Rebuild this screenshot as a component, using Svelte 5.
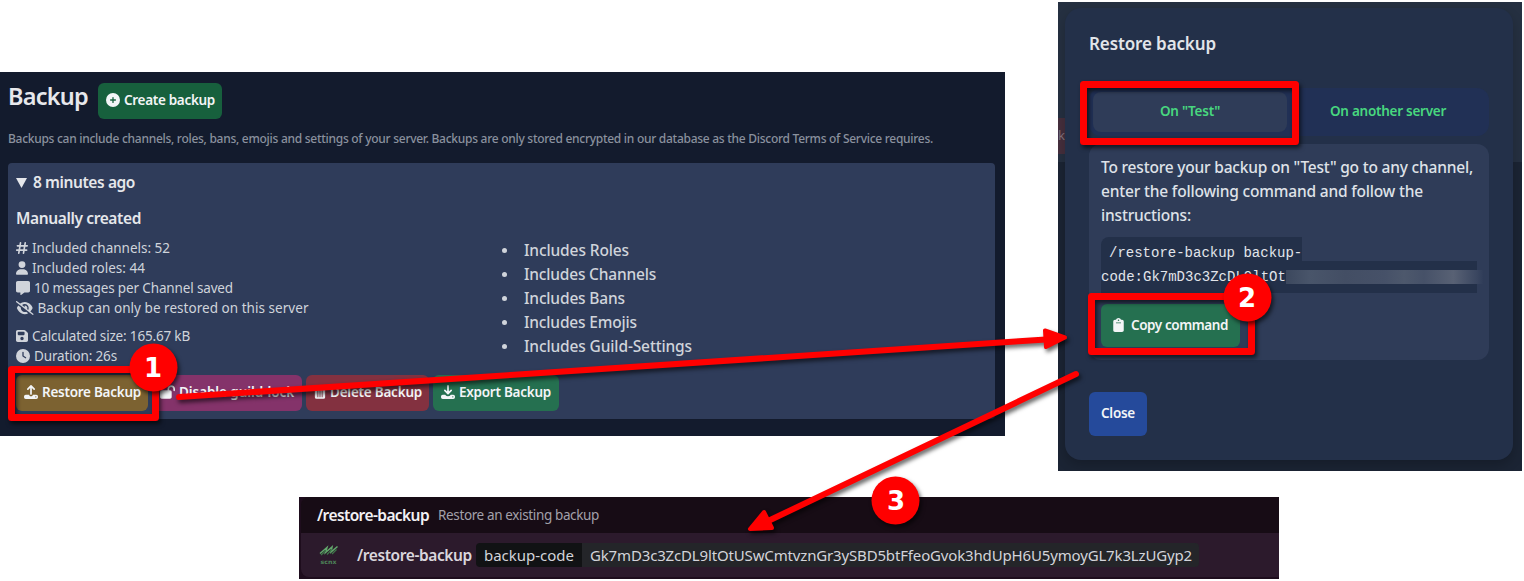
<script>
  const icons = {
    plus: { box: '0 0 512 512', w: 14, h: 14, d: 'M256 512A256 256 0 1 0 256 0a256 256 0 1 0 0 512zM232 344V280H168c-13.3 0-24-10.7-24-24s10.7-24 24-24h64V168c0-13.3 10.7-24 24-24s24 10.7 24 24v64h64c13.3 0 24 10.7 24 24s-10.7 24-24 24H280v64c0 13.3-10.7 24-24 24s-24-10.7-24-24z' },
    hash: { box: '0 0 448 512', w: 12, h: 14, line: 'M168 62L104 450M344 62L280 450M52 176H420M28 336H396' },
    user: { box: '0 0 448 512', w: 12, h: 14, d: 'M224 256A128 128 0 1 0 224 0a128 128 0 1 0 0 256zm-45.700 48C79.800 304 0 383.800 0 482.300C0 498.700 13.300 512 29.700 512H418.300c16.400 0 29.700-13.300 29.700-29.700C448 383.800 368.200 304 269.700 304H178.300z' },
    message: { box: '0 0 512 512', w: 14, h: 14, d: 'M64 0C28.700 0 0 28.700 0 64V352c0 35.300 28.700 64 64 64h96v80c0 6.100 3.400 11.600 8.800 14.300s11.900 2.100 16.800-1.500L309.300 416H448c35.300 0 64-28.700 64-64V64c0-35.300-28.700-64-64-64H64z' },
    hidden: { box: '0 0 640 512', w: 17.5, h: 14, d: 'M38.8 5.1C28.4-3.1 13.3-1.2 5.1 9.2S-1.2 34.7 9.2 42.900l592 464c10.400 8.200 25.500 6.300 33.700-4.100s6.300-25.500-4.100-33.700L525.600 386.700c39.600-40.600 66.400-86.100 79.900-118.400c3.300-7.900 3.300-16.700 0-24.600c-14.900-35.700-46.200-87.700-93-131.100C465.500 68.800 400.800 32 320 32c-68.200 0-125 26.300-169.300 60.800L38.800 5.100zM223.100 149.500C248.600 126.200 282.700 112 320 112c79.500 0 144 64.500 144 144c0 24.900-6.300 48.300-17.400 68.700L408 294.500c8.400-19.300 10.600-41.400 4.800-63.300c-11.100-41.500-47.800-69.400-88.600-71.100c-5.800-.2-9.200 6.100-7.400 11.700c2.100 6.400 3.300 13.200 3.300 20.300c0 10.200-2.400 19.800-6.600 28.300l-90.300-70.800zM373 389.900c-16.400 6.500-34.300 10.100-53 10.100c-79.500 0-144-64.500-144-144c0-6.900 .5-13.600 1.400-20.200L83.100 161.500C60.300 191.200 44 220.800 34.500 243.700c-3.300 7.900-3.300 16.700 0 24.600c14.900 35.700 46.200 87.700 93 131.100C174.500 443.200 239.200 480 320 480c47.800 0 89.900-12.900 126.200-32.500L373 389.900z' },
    save: { box: '0 0 448 512', w: 12, h: 14, d: 'M64 32C28.700 32 0 60.700 0 96V416c0 35.300 28.700 64 64 64H384c35.300 0 64-28.700 64-64V173.300c0-17-6.700-33.300-18.700-45.300L352 50.700C340 38.700 323.700 32 306.700 32H64zm0 96c0-17.700 14.300-32 32-32H288c17.700 0 32 14.300 32 32v64c0 17.700-14.300 32-32 32H96c-17.700 0-32-14.300-32-32V128zM224 288a64 64 0 1 1 0 128 64 64 0 1 1 0-128z' },
    clock: { box: '0 0 512 512', w: 14, h: 14, d: 'M256 0a256 256 0 1 1 0 512A256 256 0 1 1 256 0zM232 120V256c0 8 4 15.500 10.700 20l96 64c11 7.400 25.900 4.400 33.300-6.700s4.400-25.900-6.700-33.300L280 243.200V120c0-13.300-10.700-24-24-24s-24 10.700-24 24z' },
    upload: { box: '0 0 512 512', w: 14, h: 14, line: 'M256 330V50M140 150L256 34L372 150', d: 'M64 352H192C192 430 320 430 320 352H448Q512 352 512 416V448Q512 512 448 512H64Q0 512 0 448V416Q0 352 64 352zM432 408a24 24 0 1 0 0 48 24 24 0 1 0 0-48z' },
    download: { box: '0 0 512 512', w: 14, h: 14, line: 'M256 30V310M140 200L256 316L372 200', d: 'M64 352H150C220 430 292 430 362 352H448Q512 352 512 416V448Q512 512 448 512H64Q0 512 0 448V416Q0 352 64 352zM432 408a24 24 0 1 0 0 48 24 24 0 1 0 0-48z' },
    unlock: { box: '0 0 576 512', w: 15, h: 14, d: 'M352 144c0-44.200 35.800-80 80-80s80 35.800 80 80v48c0 17.700 14.300 32 32 32s32-14.300 32-32V144C576 64.500 511.500 0 432 0S288 64.500 288 144v48H64c-35.300 0-64 28.700-64 64V448c0 35.300 28.700 64 64 64H384c35.300 0 64-28.700 64-64V256c0-35.300-28.700-64-64-64H352V144z' },
    trash: { box: '0 0 448 512', w: 12, h: 14, d: 'M135 18L128 32H32a32 32 0 0 0 0 64H416a32 32 0 0 0 0-64H320L313 18Q304 0 284 0H164Q144 0 135 18zM416 128H32V448Q32 512 96 512H352Q416 512 416 448zM128 192h32V448h-32zM208 192h32V448h-32zM288 192h32V448h-32z' },
    clipboard: { box: '0 0 384 512', w: 11, h: 14, d: 'M192 0c-41.800 0-77.400 26.700-90.500 64H64C28.700 64 0 92.700 0 128V448c0 35.300 28.700 64 64 64H320c35.300 0 64-28.700 64-64V128c0-35.300-28.700-64-64-64H282.500C269.400 26.700 233.800 0 192 0zM192 56a28 28 0 1 1 0 56 28 28 0 1 1 0-56zM100 160H284V192H100z' }
  };

  const facts = [
    ['hash', 'Included channels: 52', 138],
    ['user', 'Included roles: 44', 113],
    ['message', '10 messages per Channel saved', 199],
    ['hidden', 'Backup can only be restored on this server', 271]
  ];
  const stats = [
    ['save', 'Calculated size: 165.67 kB', 158],
    ['clock', 'Duration: 26s', 83]
  ];
  const includes = [
    ['Includes Roles', 105],
    ['Includes Channels', 132],
    ['Includes Bans', 101],
    ['Includes Emojis', 113],
    ['Includes Guild-Settings', 168]
  ];
  const actions = [
    ['upload', 'Restore Backup', 99, 'gold', 132],
    ['unlock', 'Disable guild-lock', 115, 'purple', 150],
    ['trash', 'Delete Backup', 92, 'red', 123],
    ['download', 'Export Backup', 92, 'green', 126]
  ];

  // Tracks the letters so that a label fills the given width.
  function fit(node, width) {
    const natural = node.getBoundingClientRect().width;
    node.style.letterSpacing = (width - natural) / node.textContent.length + 'px';
  }
</script>

{#snippet icon(name)}
  {@const i = icons[name]}
  <svg class="icon" viewBox={i.box} width={i.w} height={i.h}>
    {#if i.d}<path d={i.d} fill="currentColor" fill-rule="evenodd" />{/if}
    {#if i.line}<path d={i.line} fill="none" stroke="currentColor" stroke-width="62" stroke-linecap="round" stroke-linejoin="round" />{/if}
  </svg>
{/snippet}

<main>
  <div class="top">
    <section class="backups">
      <header>
        <h1><span use:fit={80}>Backup</span></h1>
        <button class="btn create">{@render icon('plus')}<span use:fit={91}>Create backup</span></button>
      </header>
      <p class="hint"><span use:fit={925}>Backups can include channels, roles, bans, emojis and settings of your server. Backups are only stored encrypted in our database as the Discord Terms of Service requires.</span></p>
      <article>
        <h2><svg width="11" height="10" viewBox="0 0 11 10"><path d="M0 0H11L5.500 10Z" fill="currentColor" /></svg><span use:fit={102}>8 minutes ago</span></h2>
        <div class="columns">
          <div class="info">
            <h3><span use:fit={125}>Manually created</span></h3>
            <div class="facts">
              {#each facts as [name, label, w]}
                <div>{@render icon(name)}<span use:fit={w}>{label}</span></div>
              {/each}
            </div>
            <div class="facts">
              {#each stats as [name, label, w]}
                <div>{@render icon(name)}<span use:fit={w}>{label}</span></div>
              {/each}
            </div>
          </div>
          <ul>
            {#each includes as [label, w]}
              <li><i></i><span use:fit={w}>{label}</span></li>
            {/each}
          </ul>
        </div>
        <div class="actions">
          {#each actions as [name, label, w, tone, total]}
            <button class="btn {tone}" style:width="{total}px">{@render icon(name)}<span use:fit={w}>{label}</span></button>
          {/each}
        </div>
      </article>
    </section>

    <section class="backdrop">
      <div class="behind"><span>ku</span></div>
      <div class="modal">
        <h4><span use:fit={127}>Restore backup</span></h4>
        <div class="tabs">
          <button class="tab active"><span use:fit={60}>On "Test"</span></button>
          <button class="tab"><span use:fit={116}>On another server</span></button>
        </div>
        <div class="panel">
          <p>
            <span use:fit={372}>To restore your backup on "Test" go to any channel,</span><br />
            <span use:fit={322}>enter the following command and follow the</span><br />
            <span use:fit={90}>instructions:</span>
          </p>
          <div class="code">
            <code class="first">/restore-backup backup-</code>
            <code class="second">code:Gk7mD3c3ZcDL9ltOt<span class="smudge"></span></code>
          </div>
          <button class="btn copy">{@render icon('clipboard')}<span use:fit={97}>Copy command</span></button>
        </div>
        <button class="btn close"><span use:fit={34}>Close</span></button>
      </div>
    </section>
  </div>

  <section class="chat">
    <div class="suggest"><b use:fit={113}>/restore-backup</b><span use:fit={161}>Restore an existing backup</span></div>
    <div class="entry">
      <svg class="logo" width="20" height="20" viewBox="0 0 20 20">
        <path d="M1 8.500L8 2.500L6.500 7.500L13 2L12 7L18.500 1.500" fill="none" stroke="#62a76c" stroke-width="1.500" />
        <path d="M2 10L7 5.500M8 9.500L13 4.500M13 9L17.500 4.500" stroke="#3d7448" stroke-width="1.300" />
        <text x="1.500" y="18.500" textLength="16" lengthAdjust="spacingAndGlyphs" fill="#4c8358">scnx</text>
      </svg>
      <b use:fit={113}>/restore-backup</b>
      <div class="option"><span class="key"><span use:fit={90}>backup-code</span></span><span class="value"><span use:fit={602}>Gk7mD3c3ZcDL9ltOtUSwCmtvznGr3ySBD5btFfeoGvok3hdUpH6U5ymoyGL7k3LzUGyp2</span></span></div>
    </div>
  </section>

  <svg class="marks" width="1524" height="581" viewBox="0 0 1524 581">
    <g fill="none" stroke="#f00" stroke-width="7" stroke-linejoin="round">
      <rect x="11.500" y="369.500" width="144" height="48" />
      <rect x="1083.500" y="84.500" width="212" height="57" />
      <rect x="1091.500" y="296.500" width="160" height="55" />
    </g>
    <g stroke="#f00" stroke-linecap="round" stroke-linejoin="round">
      <path d="M179 397L1046 339.500" stroke-width="6" />
      <path d="M1045 330.500L1065 337.500L1046 347Z" fill="#f00" stroke-width="4" />
      <path d="M1076 374L766 522" stroke-width="6" />
      <path d="M764 512L750 529L772 528Z" fill="#f00" stroke-width="4" />
    </g>
    <g>
      <circle cx="153.500" cy="367.500" r="24" fill="#f00" />
      <circle cx="1247.500" cy="297.500" r="24" fill="#f00" />
      <circle cx="895.500" cy="500.500" r="24" fill="#f00" />
    </g>
  </svg>
  <span class="num n1">1</span>
  <span class="num n2">2</span>
  <span class="num n3">3</span>
</main>

<style>
  :global(body) { margin: 0; background: #fff; overflow: hidden; }
  main { position: relative; width: 1524px; height: 581px; overflow: hidden; font-family: "Noto Sans", sans-serif; color: #d0d4db; }
  h1, h2, h3, h4, p, ul { margin: 0; padding: 0; font-weight: 500; }
  span, b { white-space: nowrap; }
  button { border: 0; padding: 0; font: inherit; color: inherit; }
  .icon { flex: none; overflow: visible; }
  .top { display: flex; height: 497px; align-items: flex-start; }
  .backups { box-sizing: border-box; width: 1005px; height: 364px; margin-top: 72px; padding: 11px 10px 0 8px; background: #131b2d; }
  header { display: flex; height: 36px; gap: 10px; }
  h1 { width: 80px; font-size: 23.500px; font-weight: 600; line-height: 26px; color: #e7e8ec; }
  .btn { display: flex; align-items: center; box-sizing: border-box; height: 36px; padding: 0 8px 2px; gap: 4px; border-radius: 6px; font-size: 13.500px; font-weight: 600; color: #f3f5f7; line-height: 20px; }
  .create { width: 124px; background: #17603d; }
  .hint { margin-top: 10px; height: 34px; font-size: 12px; line-height: 20px; color: #8a919e; }
  article { box-sizing: border-box; height: 256px; padding: 8px; border-radius: 4px; background: #2f3c5a; }
  h2 { display: flex; align-items: center; gap: 6px; height: 24px; font-size: 15.500px; font-weight: 600; line-height: 24px; color: #e5e7eb; }
  h2 span { margin-top: -2px; }
  .columns { display: grid; grid-template-columns: 486px 1fr; height: 180px; }
  h3 { margin: 11px 0 8px; font-size: 15.500px; font-weight: 600; line-height: 24px; color: #e5e7eb; }
  .facts { font-size: 13.500px; line-height: 20px; }
  .facts + .facts { margin-top: 8px; }
  .facts div { display: flex; align-items: center; gap: 4px; height: 20px; }
  ul { margin-top: 43px; font-size: 15.500px; list-style: none; }
  li { display: flex; align-items: center; height: 24px; line-height: 24px; }
  li i { width: 5px; height: 5px; margin: 1px 17px 0 0; border-radius: 50%; background: currentColor; }
  .actions { display: flex; gap: 4px; }
  .gold { background: #7c6231; }
  .purple { background: #84336a; }
  .red { background: #833140; }
  .green { background: #257050; }

  .backdrop { position: relative; width: 464px; height: 469px; margin: 2px 0 0 53px; background: linear-gradient(#253041 160px, #1b2434 160px); overflow: hidden; }
  .behind { position: absolute; left: 0; top: 116px; width: 20px; height: 36px; background: #452f3d; color: #83727c; font-size: 13px; line-height: 34px; }
  .modal { position: relative; box-sizing: border-box; width: 448px; height: 452px; margin: 6px 0 0 7px; padding: 24px; border-radius: 16px; background: #233049; box-shadow: 0 5px 12px #0003; }
  h4 { height: 56px; font-size: 17px; font-weight: 600; line-height: 23px; color: #e2e5e9; }
  .tabs { display: grid; grid-template-columns: 194px 194px; gap: 4px; box-sizing: border-box; height: 48px; padding: 4px; border-radius: 12px; background: #213055; }
  .tab { padding-bottom: 2px; background: none; border-radius: 8px; color: #48d77f; font-size: 13.500px; font-weight: 600; line-height: 38px; }
  .active { background: #2f3c58; }
  .panel { box-sizing: border-box; height: 216px; margin-top: 8px; padding: 11px 12px 12px; border-radius: 12px; background: #2f3c58; }
  p { font-size: 15.500px; line-height: 24px; color: #dfe2e8; }
  .code { margin-top: 10px; height: 56px; }
  code { display: block; font: 14px/20px "Liberation Mono", monospace; color: #e2e5eb; background: #233049; white-space: nowrap; }
  .first { box-sizing: border-box; width: 201px; height: 24px; padding: 6px 0 0 8px; line-height: 20px; border-radius: 8px 0 0; }
  .second { display: flex; width: 376px; height: 32px; line-height: 32px; }
  .smudge { flex: none; width: 197px; height: 14px; margin-top: 9px; background: linear-gradient(90deg, #3c485e, #49556a 12%, #434e64 30%, #465168 50%, #4d586c 60%, #465168 70%, #586174 85%, #3a4660 97%, #303d59); }
  .copy { width: 139px; height: 43px; margin-top: 11px; padding: 0 12px 1px; gap: 7px; background: #257050; }
  .close { width: 58px; height: 44px; margin-top: 32px; padding: 0 12px 2px; background: #254a9b; }

  .chat { width: 980px; height: 82px; margin-left: 299px; background: #1e0d1d; }
  .suggest, .entry { display: flex; align-items: center; box-sizing: border-box; margin-left: 2px; }
  .suggest { height: 36px; padding: 0 0 1px 17px; gap: 8px; border-radius: 8px 0 0; background: #170c15; font-size: 13.500px; color: #a3a0aa; }
  b { font-size: 15.500px; font-weight: 600; color: #f2f1f4; }
  .suggest b { margin-left: -1px; padding-right: 1px; }
  .entry { height: 44px; padding-left: 18px; border-radius: 0 0 0 8px; background: #2c1a2c; }
  .entry b { width: 119px; margin-left: 18px; color: #dad6dd; }
  .logo text { font: bold 6px "DejaVu Sans", sans-serif; }
  .option { display: flex; height: 24px; border-radius: 4px; overflow: hidden; font-size: 15px; line-height: 24px; color: #d3d4da; }
  .key { box-sizing: border-box; width: 106px; padding-left: 8px; background: #111214; }
  .value { box-sizing: border-box; width: 617px; padding-left: 8px; background: #242529; }

  .marks { position: absolute; inset: 0; }
  .marks g { filter: drop-shadow(2px 3px 2px #0009); }
  .num { position: absolute; width: 48px; height: 48px; color: #fff; font: bold 26px/48px "DejaVu Sans", sans-serif; text-align: center; }
  .n1 { left: 129px; top: 344px; }
  .n2 { left: 1223px; top: 274px; }
  .n3 { left: 872px; top: 477px; }
</style>
